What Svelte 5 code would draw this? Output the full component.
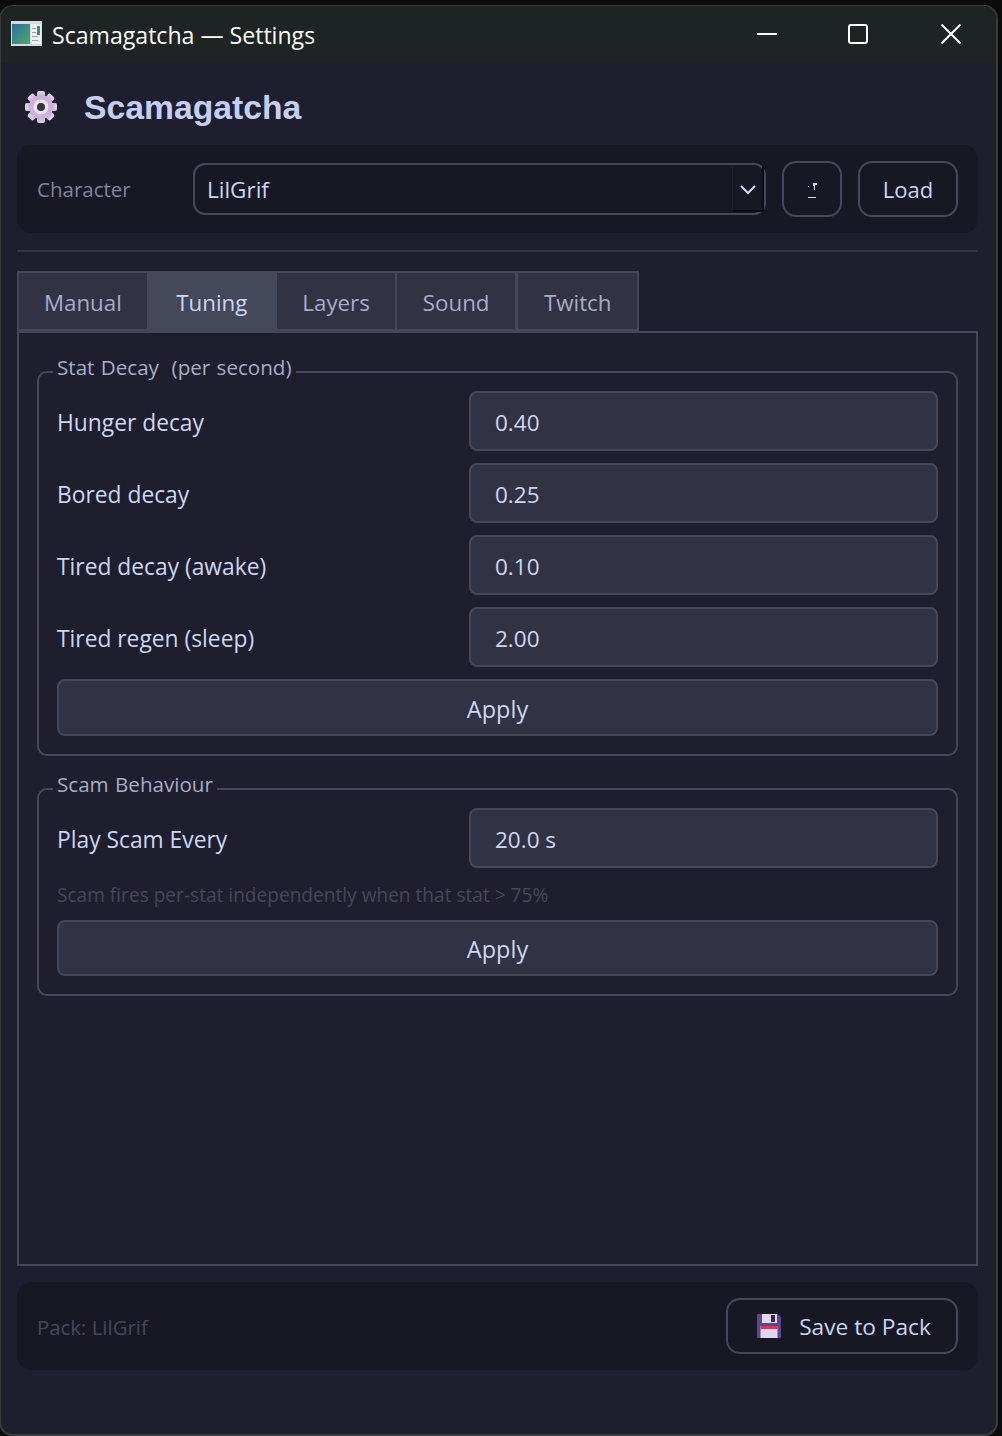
<script>
  const decayRows = [
    { label: "Hunger decay", value: "0.40" },
    { label: "Bored decay", value: "0.25" },
    { label: "Tired decay (awake)", value: "0.10" },
    { label: "Tired regen (sleep)", value: "2.00" },
  ];
  const tabs = ["Manual", "Tuning", "Layers", "Sound", "Twitch"];
  const gearTeeth = [0, 45, 90, 135, 180, 225, 270, 315];
</script>

<div class="window">
  <header class="titlebar">
    <svg class="app-icon" width="31" height="25" viewBox="0 0 31 25">
      <defs>
        <linearGradient id="screen" x1="0" y1="0" x2="1" y2="1">
          <stop offset="0" stop-color="#2f6f9f" />
          <stop offset="1" stop-color="#4fa86a" />
        </linearGradient>
      </defs>
      <rect x="0" y="0" width="31" height="25" fill="#d5dde0" />
      <rect x="1" y="3" width="18" height="20" fill="url(#screen)" />
      <rect x="20" y="3" width="10" height="20" fill="#eef2f2" />
      <rect x="26" y="5" width="3" height="9" fill="#3d8f80" />
      <rect x="21" y="7" width="4" height="1" fill="#9aa4a8" />
      <rect x="21" y="11" width="4" height="1" fill="#9aa4a8" />
      <rect x="21" y="15" width="6" height="1" fill="#9aa4a8" />
      <rect x="21" y="19" width="6" height="1" fill="#9aa4a8" />
    </svg>
    <span class="title-text">Scamagatcha — Settings</span>
    <div class="caption">
      <svg width="20" height="20" viewBox="0 0 20 20"><path d="M0 10h20" stroke="#fff" stroke-width="2" /></svg>
      <svg width="20" height="20" viewBox="0 0 20 20"><rect x="1" y="1" width="18" height="18" rx="2" fill="none" stroke="#fff" stroke-width="2" /></svg>
      <svg class="close" width="20" height="20" viewBox="0 0 20 20"><path d="M.5.5l19 19M19.5.5l-19 19" stroke="#fff" stroke-width="2" /></svg>
    </div>
  </header>

  <main class="content">
    <div class="brand">
      <svg class="gear" width="34" height="34" viewBox="0 0 34 34">
        <defs>
          <linearGradient id="cog" x1="0" y1="0" x2="0" y2="1">
            <stop offset="0" stop-color="#e6d9ee" />
            <stop offset="1" stop-color="#b69ccb" />
          </linearGradient>
        </defs>
        {#each gearTeeth as a}
          <rect x="13" y="1" width="8" height="8" rx="2" fill="url(#cog)" transform="rotate({a} 17 17)" />
        {/each}
        <circle cx="17" cy="17" r="12" fill="#c9b3da" />
        <circle cx="17" cy="17" r="7.5" fill="#efe6f4" />
        <circle cx="17" cy="17" r="4" fill="#3a3342" />
      </svg>
      <h1>Scamagatcha</h1>
    </div>

    <section class="bar char-bar">
      <span class="char-label">Character</span>
      <div class="select">
        <span class="select-value">LilGrif</span>
        <span class="select-arrow">
          <svg width="16" height="10" viewBox="0 0 16 10"><path d="M1 1l7 7 7-7" fill="none" stroke="#cdd6f4" stroke-width="2" /></svg>
        </span>
      </div>
      <button class="btn-outline refresh">
        <svg width="9" height="16" viewBox="0 0 9 16">
          <path d="M5 0h4v2H7v5H6V3H5zM0 3h1v1H0zM0 14h8v1H0z" fill="#cdd6f4" />
        </svg>
      </button>
      <button class="btn-outline load">Load</button>
    </section>

    <div class="divider"></div>

    <nav class="tabs">
      {#each tabs as tab}
        <div class="tab" class:active={tab === "Tuning"}>{tab}</div>
      {/each}
    </nav>

    <section class="panel">
      <fieldset class="group">
        <legend>Stat Decay&nbsp; (per second)</legend>
        {#each decayRows as row}
          <div class="row">
            <span class="row-label">{row.label}</span>
            <div class="input">{row.value}</div>
          </div>
        {/each}
        <button class="apply">Apply</button>
      </fieldset>

      <fieldset class="group">
        <legend>Scam Behaviour</legend>
        <div class="row">
          <span class="row-label">Play Scam Every</span>
          <div class="input">20.0 s</div>
        </div>
        <p class="hint">Scam fires per-stat independently when that stat &gt; 75%</p>
        <button class="apply">Apply</button>
      </fieldset>
    </section>

    <section class="bar footer">
      <span class="pack">Pack: LilGrif</span>
      <button class="btn-outline save">
        <svg width="24" height="24" viewBox="0 0 24 24">
          <path d="M1 0h20l3 3v20a1 1 0 0 1-1 1H1a1 1 0 0 1-1-1V1a1 1 0 0 1 1-1z" fill="#5b4694" />
          <rect x="5" y="0" width="15" height="9" fill="#e3d8ee" />
          <rect x="14" y="1" width="4" height="7" fill="#33254f" />
          <rect x="3.5" y="12" width="17" height="12" fill="#e3d4ee" />
          <rect x="3.5" y="12" width="17" height="3" fill="#e8334f" />
        </svg>
        <span>Save to Pack</span>
      </button>
    </section>
  </main>
</div>

<style>
  :global(body) {
    background: #0b0b0b;
    overflow: hidden;
  }
  .window {
    box-sizing: border-box;
    width: 999px;
    height: 1431px;
    margin-top: 5px;
    margin-left: -1px;
    border: 2px solid #3a3b3b;
    border-top-width: 1px;
    border-radius: 14px;
    overflow: hidden;
    display: flex;
    flex-direction: column;
    background: #1e1e2e;
    font-family: "Open Sans", "Noto Sans", sans-serif;
    font-size: 22.5px;
    color: #cdd6f4;
  }
  .titlebar {
    flex: 0 0 57px;
    display: flex;
    align-items: center;
    padding-left: 10px;
    background: #1e2423;
    color: #fff;
  }
  .app-icon {
    margin-right: 10px;
    margin-top: -2px;
  }
  .title-text {
    flex: 1;
    font-size: 23.1px;
  }
  .caption {
    display: flex;
    align-items: center;
    gap: 71px;
    margin-right: 35px;
    margin-top: -2px;
  }
  .close {
    margin-left: 2px;
  }
  .content {
    flex: 1;
    display: flex;
    flex-direction: column;
    padding: 0 18px 0 16px;
  }
  .brand {
    box-sizing: border-box;
    display: flex;
    align-items: center;
    height: 82px;
    padding: 6px 0 0 7px;
  }
  .gear {
    margin-right: 26px;
  }
  h1 {
    margin: 1px 0 0;
    font-family: "Liberation Sans", sans-serif;
    font-size: 33.7px;
    font-weight: 700;
    color: #c5cff5;
  }
  .bar {
    display: flex;
    align-items: center;
    height: 88px;
    flex: 0 0 88px;
    box-sizing: border-box;
    background: #181825;
    border-radius: 14px;
    padding: 0 20px;
  }
  .char-label {
    width: 156px;
    font-size: 20.5px;
    color: #7f849c;
  }
  .select {
    box-sizing: border-box;
    width: 573px;
    height: 52px;
    display: flex;
    align-items: center;
    justify-content: space-between;
    border: 2px solid #45475a;
    border-radius: 12px;
    padding-left: 12px;
    margin-right: 16px;
    background: #181825;
  }
  .select-arrow {
    box-sizing: border-box;
    width: 32px;
    height: 46px;
    padding-top: 4px;
    display: flex;
    align-items: center;
    justify-content: center;
    border-left: 1px solid #20202f;
    border-right: 2px solid #0c0c14;
    border-bottom: 2px solid #0c0c14;
  }
  button {
    font: inherit;
    color: inherit;
    cursor: pointer;
  }
  .btn-outline {
    box-sizing: border-box;
    height: 56px;
    display: flex;
    align-items: center;
    justify-content: center;
    background: #181825;
    border: 2px solid #45475a;
    border-radius: 14px;
    padding: 0;
  }
  .refresh {
    width: 60px;
    margin-right: 16px;
  }
  .refresh svg {
    margin-top: 3px;
  }
  .load {
    width: 100px;
    font-size: 22px;
  }
  .divider {
    height: 2px;
    background: #313244;
    margin: 17px 0 19px;
    flex: none;
  }
  .tabs {
    display: flex;
    flex: none;
    height: 60px;
    align-self: flex-start;
    background: #45475a;
  }
  .tab {
    box-sizing: border-box;
    display: flex;
    align-items: center;
    justify-content: center;
    height: 56px;
    margin: 2px 2px 0 0;
    background: #313244;
    color: #a6adc8;
    padding: 2px 25.5px 0;
    font-size: 22.3px;
  }
  .tab:first-child {
    margin-left: 2px;
    margin-right: 1px;
    padding: 2px 25px 0;
  }
  .tab:nth-child(4) {
    margin-right: 3px;
  }
  .tab:last-child {
    padding: 2px 26px 0;
  }
  .tab.active {
    background: #45475a;
    color: #cdd6f4;
    margin-right: 1px;
    padding: 0 28.5px;
    height: 58px;
  }
  .panel {
    box-sizing: border-box;
    flex: 0 0 935px;
    border: 2px solid #45475a;
    padding: 24px 18px 0;
    display: flex;
    flex-direction: column;
    gap: 18px;
  }
  .group {
    margin: 0;
    border: 2px solid #45475a;
    border-radius: 10px;
    padding: 4px 18px 18px;
    display: flex;
    flex-direction: column;
    gap: 12px;
  }
  .group + .group .apply {
    height: 56px;
  }
  legend {
    margin-left: -4px;
    padding: 0 4px 10px;
    color: #a6adc8;
    font-size: 20.6px;
    line-height: 20px;
    word-spacing: 1px;
  }
  .row {
    display: flex;
    align-items: center;
    justify-content: space-between;
  }
  .row-label {
    font-size: 22.8px;
    padding-top: 2px;
  }
  .input {
    box-sizing: border-box;
    width: 469px;
    height: 60px;
    display: flex;
    align-items: center;
    padding: 2px 0 0 24px;
    background: #313244;
    border: 2px solid #45475a;
    border-radius: 8px;
  }
  .apply {
    height: 57px;
    background: #313244;
    border: 2px solid #45475a;
    border-radius: 8px;
    padding: 2px 0 0;
    font-size: 23.5px;
  }
  .hint {
    margin: 0;
    padding-top: 2px;
    font-size: 19.1px;
    line-height: 26px;
    color: #45475a;
  }
  .footer {
    justify-content: space-between;
    margin-top: 16px;
  }
  .pack {
    padding-top: 2px;
    font-size: 20.4px;
    color: #45475a;
  }
  .save {
    width: 232px;
    gap: 18px;
    padding-left: 4px;
    font-size: 22.7px;
  }
</style>
